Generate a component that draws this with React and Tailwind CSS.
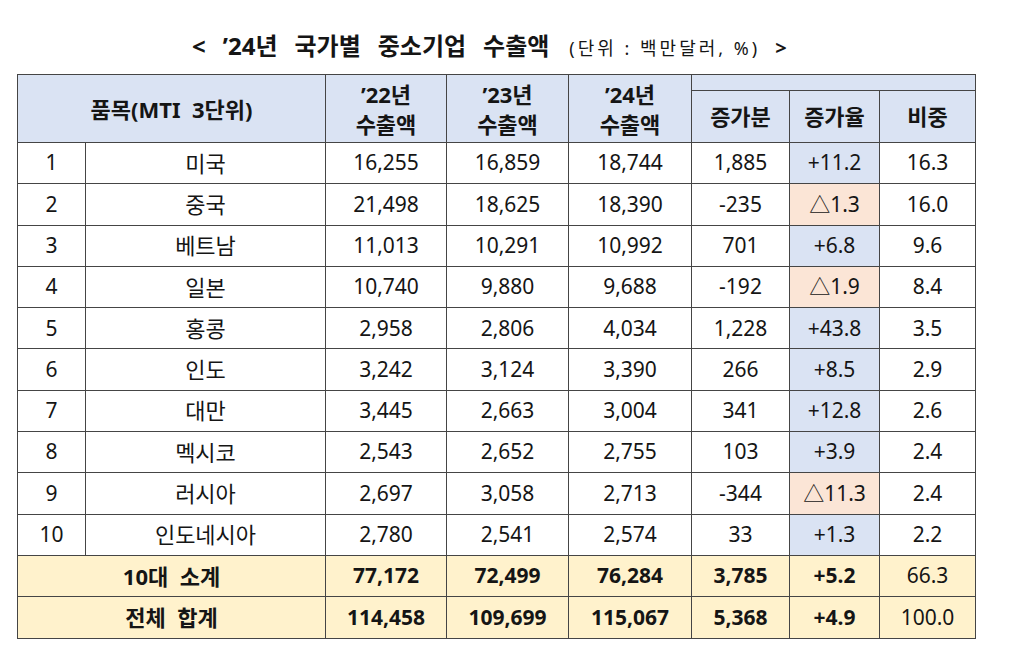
import React from 'react';

const rows = [
  ['1', '미국', '16,255', '16,859', '18,744', '1,885', '+11.2', '16.3', 'up'],
  ['2', '중국', '21,498', '18,625', '18,390', '-235', '△1.3', '16.0', 'down'],
  ['3', '베트남', '11,013', '10,291', '10,992', '701', '+6.8', '9.6', 'up'],
  ['4', '일본', '10,740', '9,880', '9,688', '-192', '△1.9', '8.4', 'down'],
  ['5', '홍콩', '2,958', '2,806', '4,034', '1,228', '+43.8', '3.5', 'up'],
  ['6', '인도', '3,242', '3,124', '3,390', '266', '+8.5', '2.9', 'up'],
  ['7', '대만', '3,445', '2,663', '3,004', '341', '+12.8', '2.6', 'up'],
  ['8', '멕시코', '2,543', '2,652', '2,755', '103', '+3.9', '2.4', 'up'],
  ['9', '러시아', '2,697', '3,058', '2,713', '-344', '△11.3', '2.4', 'down'],
  ['10', '인도네시아', '2,780', '2,541', '2,574', '33', '+1.3', '2.2', 'up'],
];

const totals = [
  ['10대', '소계', '77,172', '72,499', '76,284', '3,785', '+5.2', '66.3'],
  ['전체', '합계', '114,458', '109,699', '115,067', '5,368', '+4.9', '100.0'],
];

const cell = 'border border-[#454545] text-center p-0';

const App = () => {
  return (
    <div
      className="w-[1024px] h-[668px] bg-white text-[#151515] overflow-hidden"
      style={{ fontFamily: '"Noto Sans", "Noto Sans CJK KR", sans-serif' }}
    >
      {/* title */}
      <div className="flex items-baseline pl-[192px] pt-[28px] h-[74px]">
        <div className="flex items-baseline gap-[17px] text-[24px] font-bold">
          <span>&lt;</span>
          <span>’24년</span>
          <span>국가별</span>
          <span>중소기업</span>
          <span>수출액</span>
        </div>
        <span className="text-[18px] ml-[20px] tracking-[3px]">(단위 : 백만달러, %)</span>
        <span className="text-[20px] font-bold ml-[15px]">&gt;</span>
      </div>

      <table className="ml-[17px] border-collapse table-fixed w-[958px] text-[21px]">
        <colgroup>
          <col className="w-[68px]" />
          <col className="w-[240px]" />
          <col className="w-[121px]" />
          <col className="w-[122px]" />
          <col className="w-[123px]" />
          <col className="w-[98px]" />
          <col className="w-[90px]" />
          <col className="w-[96px]" />
        </colgroup>
        <thead className="text-[22px]">
          <tr className="h-[16px] bg-[#dae3f3] font-bold">
            <th colSpan={2} rowSpan={2} className={`${cell} leading-[28px]`}>
              품목(MTI&nbsp; 3단위)
            </th>
            <th rowSpan={2} className={`${cell} leading-[30px]`}>
              ’22년
              <br />
              수출액
            </th>
            <th rowSpan={2} className={`${cell} leading-[30px]`}>
              ’23년
              <br />
              수출액
            </th>
            <th rowSpan={2} className={`${cell} leading-[30px]`}>
              ’24년
              <br />
              수출액
            </th>
            <th colSpan={3} className={cell}></th>
          </tr>
          <tr className="h-[52px] bg-[#dae3f3] font-bold">
            <th className={cell}>증가분</th>
            <th className={cell}>증가율</th>
            <th className={cell}>비중</th>
          </tr>
        </thead>
        <tbody>
          {rows.map((r) => (
            <tr key={r[0]} className="h-[41.3px]">
              <td className={cell}>{r[0]}</td>
              <td className={`${cell} text-[22px]`}>{r[1]}</td>
              <td className={cell}>{r[2]}</td>
              <td className={cell}>{r[3]}</td>
              <td className={cell}>{r[4]}</td>
              <td className={cell}>{r[5]}</td>
              <td className={`${cell} ${r[8] === 'up' ? 'bg-[#dae3f3]' : 'bg-[#fbe5d6]'}`}>{r[6]}</td>
              <td className={cell}>{r[7]}</td>
            </tr>
          ))}
          {totals.map((t) => (
            <tr key={t[0]} className="h-[41.3px] bg-[#fff2cc]">
              <td colSpan={2} className={`${cell} font-bold text-[22px]`}>
                {t[0]}&nbsp; {t[1]}
              </td>
              <td className={`${cell} font-bold`}>{t[2]}</td>
              <td className={`${cell} font-bold`}>{t[3]}</td>
              <td className={`${cell} font-bold`}>{t[4]}</td>
              <td className={`${cell} font-bold`}>{t[5]}</td>
              <td className={`${cell} font-bold`}>{t[6]}</td>
              <td className={cell}>{t[7]}</td>
            </tr>
          ))}
        </tbody>
      </table>
    </div>
  );
};

export default App;
